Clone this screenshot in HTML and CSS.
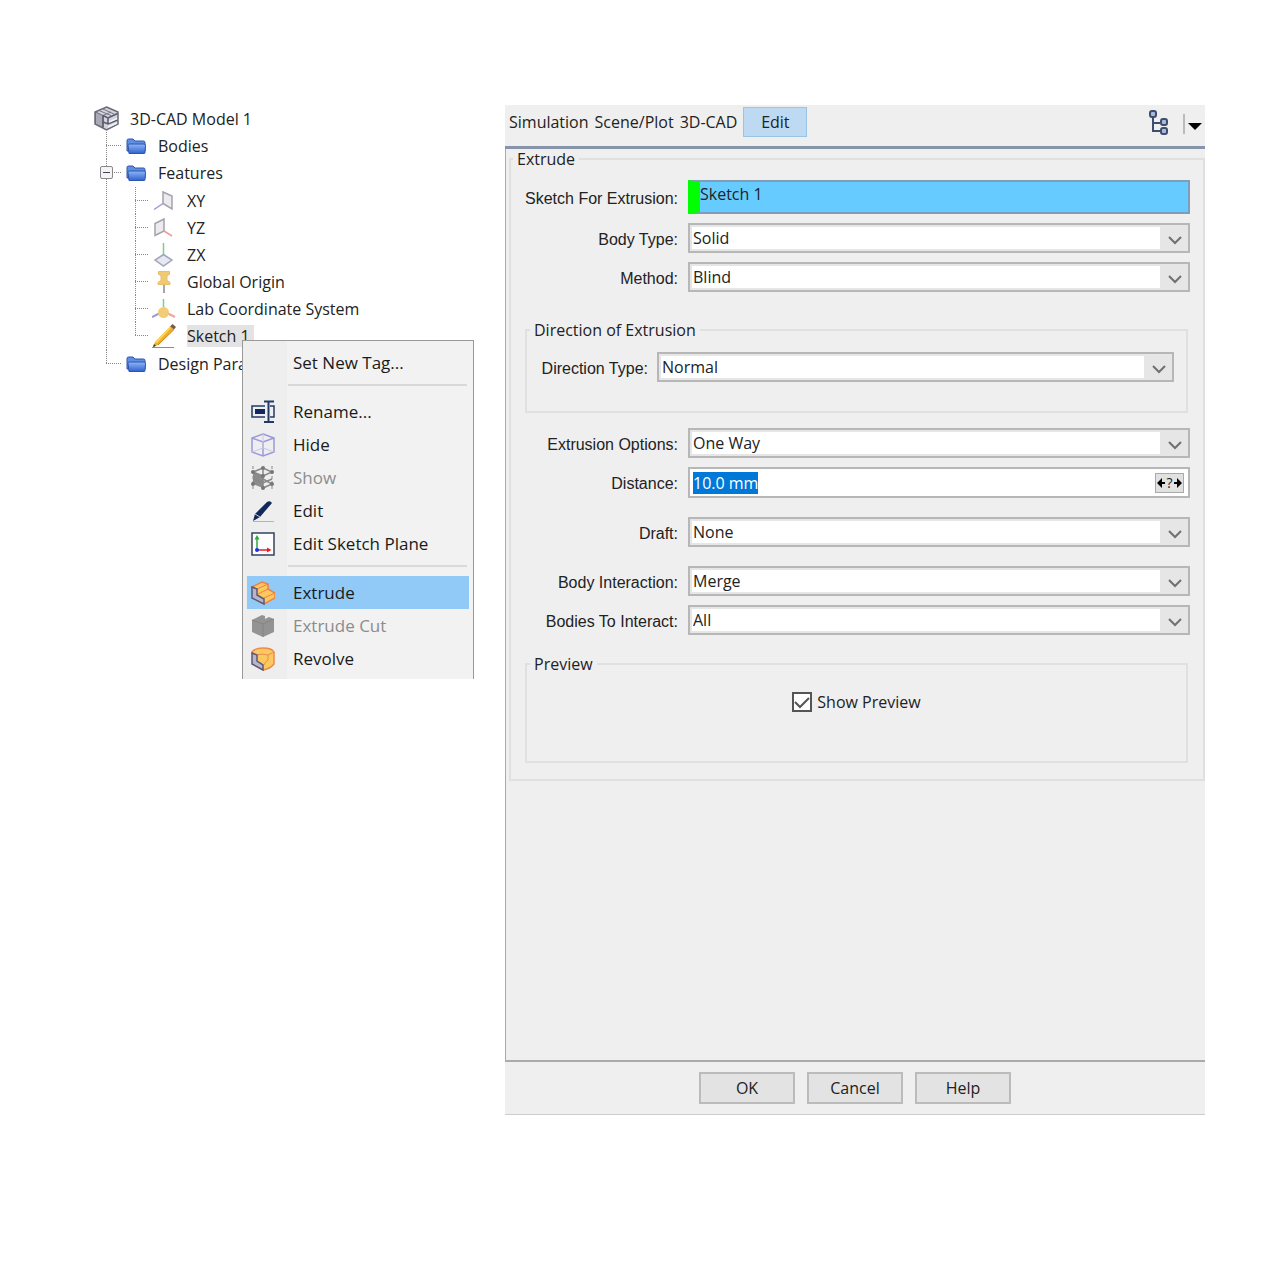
FILE: index.html
```html
<!DOCTYPE html>
<html lang="en">
<head>
  <meta charset="UTF-8">
  <meta name="viewport" content="width=device-width, initial-scale=1.0">
  <title>3D-CAD Model 1 - Extrude</title>
  <link rel="stylesheet" href="styles.css">
</head>
<body>
  <svg class="defs" aria-hidden="true">
    <defs>
      <linearGradient id="blue" x1="0" y1="0" x2="0" y2="1">
        <stop offset="0" stop-color="#8fb6f5"/>
        <stop offset="1" stop-color="#2f62d0"/>
      </linearGradient>
      <symbol id="folder" viewBox="0 0 20 18">
        <path d="M1 14V3.500Q1 2 2.500 2H7l2 2h8.500Q19 4 19 5.500V14z" fill="#5d8fe4" stroke="#2c55ae"/>
        <path d="M3 16.500 2 8.500Q2 7 3.500 7h14.500Q19.500 7 19.500 8.500L19 15.500Q19 16.500 18 16.500z" fill="url(#blue)" stroke="#2c55ae"/>
      </symbol>
    </defs>
  </svg>

  <div class="browser">
    <ul class="tree">
      <li>
        <div class="row">
          <svg class="model-icon" viewBox="0 0 25 25" width="25" height="25">
            <path d="M12.500 1 24 6v12l-11.500 6L1 18V6z" fill="#d3d3dc" stroke="#6a6a78" stroke-width="1.500"/>
            <path d="M1.500 6 9 9.500v12L1.500 18z" fill="#a9a9b8" stroke="#6b6b7a"/>
            <path d="M5 4.500 17 9.500M9 3 20 8M9 9.500 17 6" stroke="#77778a" fill="none"/>
            <path d="M9 9.500v6.500l5 2 9.500-4M9 9.500l5 2.500 9.500-4.500M14 12v6M9 16v5.500" stroke="#5a5a6e" stroke-width="1.500" fill="none"/>
            <path d="M15 16 23 12.500M14 21 23 17" stroke="#f2f2f7" stroke-width="1.500"/>
          </svg>
          <span>3D-CAD Model 1</span>
        </div>
        <ul class="branch">
          <li>
            <div class="row"><span class="twig"></span><svg class="folder" width="20" height="18"><use href="#folder"/></svg><span>Bodies</span></div>
          </li>
          <li>
            <div class="row">
              <span class="twig"><button class="expander" aria-label="Collapse Features"></button></span>
              <svg class="folder" width="20" height="18"><use href="#folder"/></svg><span>Features</span>
            </div>
            <ul class="leaves">
              <li class="row">
                <span class="twig"></span>
                <svg width="24" height="24" viewBox="0 0 24 24">
                  <path d="M11 3l9 4v13l-9-5.500z" fill="#ececf0" stroke="#a3a3ab" stroke-width="1.500"/>
                  <path d="M11 14.500 2 20.500" stroke="#9a9ad8" stroke-width="1.500"/>
                </svg>
                <span>XY</span>
              </li>
              <li class="row">
                <span class="twig"></span>
                <svg width="24" height="24" viewBox="0 0 24 24">
                  <path d="M12 3v12l-9 4.500v-12z" fill="#ececf0" stroke="#a3a3ab" stroke-width="1.500"/>
                  <path d="M12 15l8 5" stroke="#ee9b9b" stroke-width="1.500"/>
                </svg>
                <span>YZ</span>
              </li>
              <li class="row">
                <span class="twig"></span>
                <svg width="24" height="24" viewBox="0 0 24 24">
                  <path d="M11.500 11.500 20 17l-8.500 6L3 17z" fill="#e6e8f4" stroke="#a3a6b8" stroke-width="1.500"/>
                  <path d="M11.500 0v12" stroke="#7ccf88" stroke-width="1.500"/>
                </svg>
                <span>ZX</span>
              </li>
              <li class="row">
                <span class="twig"></span>
                <svg width="24" height="24" viewBox="0 0 24 24">
                  <path d="M12 14v9" stroke="#a7a7a7" stroke-width="2"/>
                  <path d="M6.500 1.500h11v3L15 5.500v5l3 2v2H6v-2l3-2v-5l-2.500-1z" fill="#f0c972" stroke="#e6bf68"/>
                </svg>
                <span>Global Origin</span>
              </li>
              <li class="row">
                <span class="twig"></span>
                <svg width="24" height="24" viewBox="0 0 24 24">
                  <path d="M11.500 2v10" stroke="#7ccf88" stroke-width="1.500"/>
                  <path d="M8 16 0 20" stroke="#9a9ad8" stroke-width="2"/>
                  <path d="M15 16l8 4" stroke="#f0a3a3" stroke-width="2"/>
                  <circle cx="11.500" cy="15.500" r="5.500" fill="#f3cd75"/>
                </svg>
                <span>Lab Coordinate System</span>
              </li>
              <li class="row">
                <span class="twig"></span>
                <svg width="24" height="24" viewBox="0 0 24 24">
                  <path d="M0 23.500h22" stroke="#8b8b8b" stroke-width="1"/>
                  <path d="M1 23l2-5L18 2.500l4 3L6 21z" fill="#f2ae22"/>
                  <path d="M3 18 18 2.500l1.500 1L5 19z" fill="#fbd45f"/>
                  <path d="M6 21 22 5.500" stroke="#c98617"/>
                  <path d="M18 2.500 20.500 0 24 3l-2 2.500z" fill="#7b5a48"/>
                  <path d="M1 23l1-3 2 2z" fill="#333"/>
                </svg>
                <span class="selected">Sketch 1</span>
              </li>
            </ul>
          </li>
          <li>
            <div class="row"><span class="twig"></span><svg class="folder" width="20" height="18"><use href="#folder"/></svg><span>Design Parameters</span></div>
          </li>
        </ul>
      </li>
    </ul>

    <div class="menu" role="menu">
      <button class="item" role="menuitem"><span class="icon"></span>Set New Tag...</button>
      <hr>
      <button class="item" role="menuitem">
        <svg class="icon" viewBox="0 0 24 24">
          <path d="M14 6H1v11h13M19 6h4v11h-4" fill="none" stroke="#233a68" stroke-width="1.500"/>
          <path d="M4 9h10v5H4z" fill="#10285c"/>
          <path d="M13 1.500h10M13 22h10M17.500 2v20" stroke="#233a68" stroke-width="2"/>
        </svg>
        Rename...
      </button>
      <button class="item" role="menuitem">
        <svg class="icon" viewBox="0 0 24 24" fill="none" stroke="#9c98dc" stroke-width="1.500">
          <path d="M12 1l11 4v14l-11 4L1 19V5z"/>
          <path d="M1 5l11 4 11-4M12 9v14"/>
          <path d="M12 1v14M1 19l11-4 11 4" stroke="#c8c6ea" stroke-width="1"/>
        </svg>
        Hide
      </button>
      <button class="item" role="menuitem" disabled>
        <svg class="icon" viewBox="0 0 24 24">
          <path d="M2 6l10 4v12L2 18z" fill="#8c8c8c"/>
          <path d="M12 2 2 6l10 4 9-4zM21 18l-9 4V10M12 2v9M2 13l10 4 9-4M12 13l9 5" fill="none" stroke="#888" stroke-width="1.500"/>
          <path d="M2 0v24M21 0v24" stroke="#888" stroke-dasharray="3 2"/>
          <g fill="#777"><circle cx="2" cy="6" r="2"/><circle cx="12" cy="2" r="2"/><circle cx="21" cy="6" r="2"/><circle cx="12" cy="10" r="2"/><circle cx="2" cy="18" r="2"/><circle cx="21" cy="18" r="2"/><circle cx="12" cy="22" r="2"/></g>
        </svg>
        Show
      </button>
      <button class="item" role="menuitem">
        <svg class="icon" viewBox="0 0 24 24">
          <path d="M2 22.500h21" stroke="#aeb5c4"/>
          <path d="M2 22l2-7L16 3q3-2 5 1L9 18z" fill="#10285c"/>
          <path d="M4 15l5 3" stroke="#c9cfdc"/>
        </svg>
        Edit
      </button>
      <button class="item" role="menuitem">
        <svg class="icon" viewBox="0 0 24 24">
          <path d="M1 1h22v22H1z" fill="#fdfdfd" stroke="#34415f" stroke-width="1.500"/>
          <path d="M6 18V5" stroke="#2ea83c" stroke-width="1.500"/>
          <path d="M3.500 7.500 6 3l2.500 4.500z" fill="#2ea83c"/>
          <path d="M6 18h12" stroke="#e81c24" stroke-width="1.500"/>
          <path d="M16 15.500 20.500 18 16 20.500z" fill="#e81c24"/>
          <circle cx="6" cy="18" r="2" fill="#1b2ff0"/>
        </svg>
        Edit Sketch Plane
      </button>
      <hr>
      <button class="item active" role="menuitem">
        <svg class="icon" viewBox="0 0 24 24">
          <path d="M1 6 11 1l6 2v5l7 4v5l-11 6-6-3z" fill="#fbc95f" stroke="#ee8146" stroke-width="1.500"/>
          <path d="M6 8l11-5M7 13l10-5M13 17l11-5" stroke="#ee8146" fill="none"/>
          <path d="M1 6l5 2v6l7 4v5L1 17z" fill="#b4b6cc" stroke="#5d5775" stroke-width="1.500"/>
        </svg>
        Extrude
      </button>
      <button class="item" role="menuitem" disabled>
        <svg class="icon" viewBox="0 0 24 24">
          <path d="M1 6 11 1l3 1v3l4-2 5 2v13l-11 5-11-5z" fill="#939393"/>
          <path d="M12 9v14M1 6l11 4 11-5" stroke="#858585" fill="none"/>
        </svg>
        Extrude Cut
      </button>
      <button class="item" role="menuitem">
        <svg class="icon" viewBox="0 0 24 24">
          <path d="M1 5q3-4 11-4 9 0 11 4v12q-4 5-11 6l-5-3z" fill="#fbc95f" stroke="#ee8a4c" stroke-width="1.500"/>
          <path d="M6 8q5-2 11 0v5q-3 2-4 5M17 8l6-3" stroke="#ee8a4c" fill="none"/>
          <path d="M1 6l5 2v6l6 4v5L1 17z" fill="#b4b6cc" stroke="#5d5775" stroke-width="1.500"/>
        </svg>
        Revolve
      </button>
    </div>
  </div>

  <main class="panel">
    <header class="tabs">
      <button>Simulation</button>
      <button>Scene/Plot</button>
      <button>3D-CAD</button>
      <button class="current">Edit</button>
      <div class="tools">
        <button aria-label="Tree view">
          <svg width="20" height="26" viewBox="0 0 20 26" fill="none" stroke="#3f4c6e" stroke-width="2">
            <path d="M4 7v15h7M4 14h7"/>
            <rect x="1" y="2" width="6" height="6" rx="2" fill="#a9bbdb"/>
            <rect x="12" y="10" width="6" height="6" rx="2" fill="#a9bbdb"/>
            <rect x="12" y="19" width="6" height="6" rx="2" fill="#a9bbdb"/>
          </svg>
        </button>
        <button class="more" aria-label="More">
          <svg width="14" height="8" viewBox="0 0 14 8"><path d="M0 1h14L7 8z" fill="#000"/></svg>
        </button>
      </div>
    </header>

    <form class="editor">
      <fieldset class="extrude">
        <legend>Extrude</legend>
        <div class="field">
          <label for="sketch">Sketch For Extrusion:</label>
          <input class="sketch" id="sketch" type="text" value="Sketch 1" readonly>
        </div>
        <div class="field">
          <label for="body-type">Body Type:</label>
          <select id="body-type"><option>Solid</option></select>
        </div>
        <div class="field">
          <label for="method">Method:</label>
          <select id="method"><option>Blind</option></select>
        </div>

        <fieldset class="direction">
          <legend>Direction of Extrusion</legend>
          <div class="field">
            <label for="direction">Direction Type:</label>
            <select id="direction"><option>Normal</option></select>
          </div>
        </fieldset>

        <div class="field">
          <label for="options">Extrusion Options:</label>
          <select id="options"><option>One Way</option></select>
        </div>
        <div class="field">
          <label for="distance">Distance:</label>
          <div class="measure">
            <input id="distance" type="text" value="10.0 mm">
            <button type="button" aria-label="Measure">
              <svg width="8" height="10" viewBox="0 0 8 10"><path d="M0 5l5-5v4h3v2H5v4z"/></svg>
              <span>?</span>
              <svg width="8" height="10" viewBox="0 0 8 10"><path d="M8 5 3 0v4H0v2h3v4z"/></svg>
            </button>
          </div>
        </div>
        <div class="field spaced">
          <label for="draft">Draft:</label>
          <select id="draft"><option>None</option></select>
        </div>
        <div class="field spaced">
          <label for="interaction">Body Interaction:</label>
          <select id="interaction"><option>Merge</option></select>
        </div>
        <div class="field">
          <label for="bodies">Bodies To Interact:</label>
          <select id="bodies"><option>All</option></select>
        </div>

        <fieldset class="preview">
          <legend>Preview</legend>
          <label><input type="checkbox" checked>Show Preview</label>
        </fieldset>
      </fieldset>
    </form>

    <footer class="actions">
      <button>OK</button>
      <button>Cancel</button>
      <button>Help</button>
    </footer>
  </main>

  <script>
    // Start with the distance selected so it can be typed over
    const distance = document.getElementById('distance');
    distance.focus();
    distance.select();
  </script>
</body>
</html>
```
FILE: styles.css
```css
* {
  box-sizing: border-box;
}

body {
  margin: 0;
  padding: 105px 75px 0 94px;
  display: grid;
  grid-template-columns: 411px 1fr;
  background: #fff;
  color: #222;
  font-family: "Open Sans", sans-serif;
  font-size: 16px;
}

button, input, select {
  font: inherit;
  color: inherit;
}

button {
  border: none;
  background: none;
  padding: 0;
}

.defs {
  position: absolute;
  width: 0;
  height: 0;
}

/* Feature tree */
.browser {
  position: relative;
}

.tree, .tree ul {
  list-style: none;
  margin: 0;
  padding: 0;
}

.row {
  display: flex;
  align-items: center;
  height: 27px;
  white-space: nowrap;
}

.model-icon {
  margin-right: 11px;
}

.folder {
  margin-right: 12px;
}

.branch > li {
  background: repeating-linear-gradient(#888 0 1px, transparent 1px 2px) 12px 0 / 1px 100% no-repeat;
}

.branch > li:last-child {
  background-size: 1px 14px;
}

.twig {
  display: flex;
  align-items: center;
  align-self: stretch;
  width: 32px;
  background: repeating-linear-gradient(90deg, #888 0 1px, transparent 1px 2px) 12px 13px / 16px 1px no-repeat;
}

.expander {
  width: 13px;
  height: 13px;
  margin-left: 6px;
  border: 1px solid #888;
  border-radius: 2px;
  background: linear-gradient(#445, #445) center / 7px 1px no-repeat #f4f4f4;
}

.tree .leaves {
  margin-left: 32px;
  padding: 1px 0;
}

.leaves li {
  background: repeating-linear-gradient(#888 0 1px, transparent 1px 2px) 9px 0 / 1px 100% no-repeat;
}

.leaves li:last-child {
  background-size: 1px 14px;
}

.leaves .twig {
  width: 26px;
  background-position: 9px 13px;
  background-size: 14px 1px;
}

.leaves svg {
  margin-right: 11px;
}

.selected {
  background: #e3e3e3;
  padding-right: 4px;
}

/* Context menu */
.menu {
  position: absolute;
  left: 148px;
  top: 235px;
  width: 232px;
  padding: 5px 4px 4px;
  border: 1px solid #999;
  border-bottom: none;
  background: linear-gradient(90deg, #eee 44px, #f2f2f2 44px);
  font-size: 17px;
}

.item {
  display: flex;
  align-items: center;
  gap: 18px;
  width: 100%;
  height: 33px;
  padding-left: 4px;
  color: #1a1a1a;
}

.item:disabled {
  color: #8c8c8c;
}

.item.active {
  background: #91c9f7;
}

.icon {
  width: 24px;
  height: 24px;
}

.menu hr {
  height: 2px;
  margin: 5px 2px 9px 41px;
  border: none;
  background: #d9d9d9;
}

/* Edit panel */
.panel {
  display: flex;
  flex-direction: column;
  min-height: calc(100vh - 270px);
  background: #efefef;
  border-bottom: 1px solid #ccc;
}

.tabs {
  display: flex;
  align-items: flex-start;
  gap: 6px;
  padding: 2px 3px 7px 4px;
  border-bottom: 3px solid #8795ab;
}

.tabs button {
  height: 30px;
}

.tabs .current {
  width: 64px;
  background: #bddaf2;
  border: 1px solid #9ac4e6;
}

.tools {
  display: flex;
  align-items: center;
  gap: 14px;
  margin-left: auto;
  padding-top: 2px;
}

.tabs .more {
  height: 20px;
  padding-left: 3px;
  border-left: 2px solid #bbb;
  line-height: 14px;
}

.editor {
  flex: 1;
  padding: 0 0 0 3px;
  border-left: 1px solid #aaa;
  border-bottom: 2px solid #aaa;
}

fieldset {
  margin: 0;
  min-width: 0;
  border: 2px solid #e0e0e0;
}

legend {
  height: 20px;
  padding: 0 4px;
  line-height: 20px;
}

.extrude {
  display: flex;
  flex-direction: column;
  gap: 9px;
  padding: 11px 13px 16px 0;
}

.extrude > legend {
  margin-left: 2px;
}

.field {
  display: grid;
  grid-template-columns: 167px 1fr;
  gap: 10px;
  align-items: center;
}

.field label {
  padding-top: 3px;
  text-align: right;
  font-family: "Liberation Sans", sans-serif;
}

.spaced {
  margin-top: 10px;
}

select {
  appearance: none;
  width: 100%;
  height: 30px;
  padding: 0 30px 1px 3px;
  border: 2px solid #b7b7b7;
  border-radius: 0;
  background:
    url("data:image/svg+xml,%3Csvg xmlns='http://www.w3.org/2000/svg' width='14' height='9'%3E%3Cpath d='M1 1l6 6 6-6' fill='none' stroke='%23707070' stroke-width='2'/%3E%3C/svg%3E") right 6px top 11px no-repeat,
    linear-gradient(#fff, #fff) 2px 2px / calc(100% - 30px) calc(100% - 4px) no-repeat,
    #e6e6e6;
}

.sketch {
  width: 100%;
  height: 34px;
  padding: 0 0 6px;
  border: 2px solid #7f9db9;
  border-left: 12px solid #0f0;
  border-radius: 0;
  background: #66ccff;
}

.direction {
  margin: 19px 2px 6px 14px;
  padding: 12px 12px 29px 0;
}

.direction .field {
  grid-template-columns: 121px 1fr;
  gap: 9px;
}

.direction legend, .preview legend {
  margin-left: 3px;
}

.measure {
  display: flex;
  align-items: center;
  height: 31px;
  padding: 0 4px 0 2px;
  border: 2px solid #b7b7b7;
  background: #fff;
}

.measure input {
  flex: 1;
  min-width: 0;
  height: 24px;
  padding: 0 1px;
  border: none;
  outline: none;
  background: none;
}

.measure input::selection {
  background: #0078d7;
  color: #fff;
}

.measure button {
  display: flex;
  align-items: center;
  justify-content: center;
  gap: 1px;
  width: 29px;
  height: 20px;
  border: 1px solid #aaa;
  background: #e1e1e1;
  font-size: 14px;
}

.preview {
  margin: 10px 2px 0 14px;
  padding: 17px 0 48px;
}

.preview label {
  display: flex;
  align-items: center;
  justify-content: center;
  gap: 5px;
}

.preview input {
  appearance: none;
  width: 20px;
  height: 20px;
  margin: 0;
  border: 2px solid #555;
  background: #fff;
}

.preview input:checked {
  background: url("data:image/svg+xml,%3Csvg xmlns='http://www.w3.org/2000/svg' width='16' height='16'%3E%3Cpath d='M1 8l5 5 9-9' fill='none' stroke='%23555' stroke-width='2'/%3E%3C/svg%3E") center no-repeat #fff;
}

.actions {
  display: flex;
  justify-content: center;
  gap: 12px;
  padding: 10px 0;
}

.actions button {
  width: 96px;
  height: 32px;
  border: 2px solid #bbb;
  background: #e3e3e3;
}
```
